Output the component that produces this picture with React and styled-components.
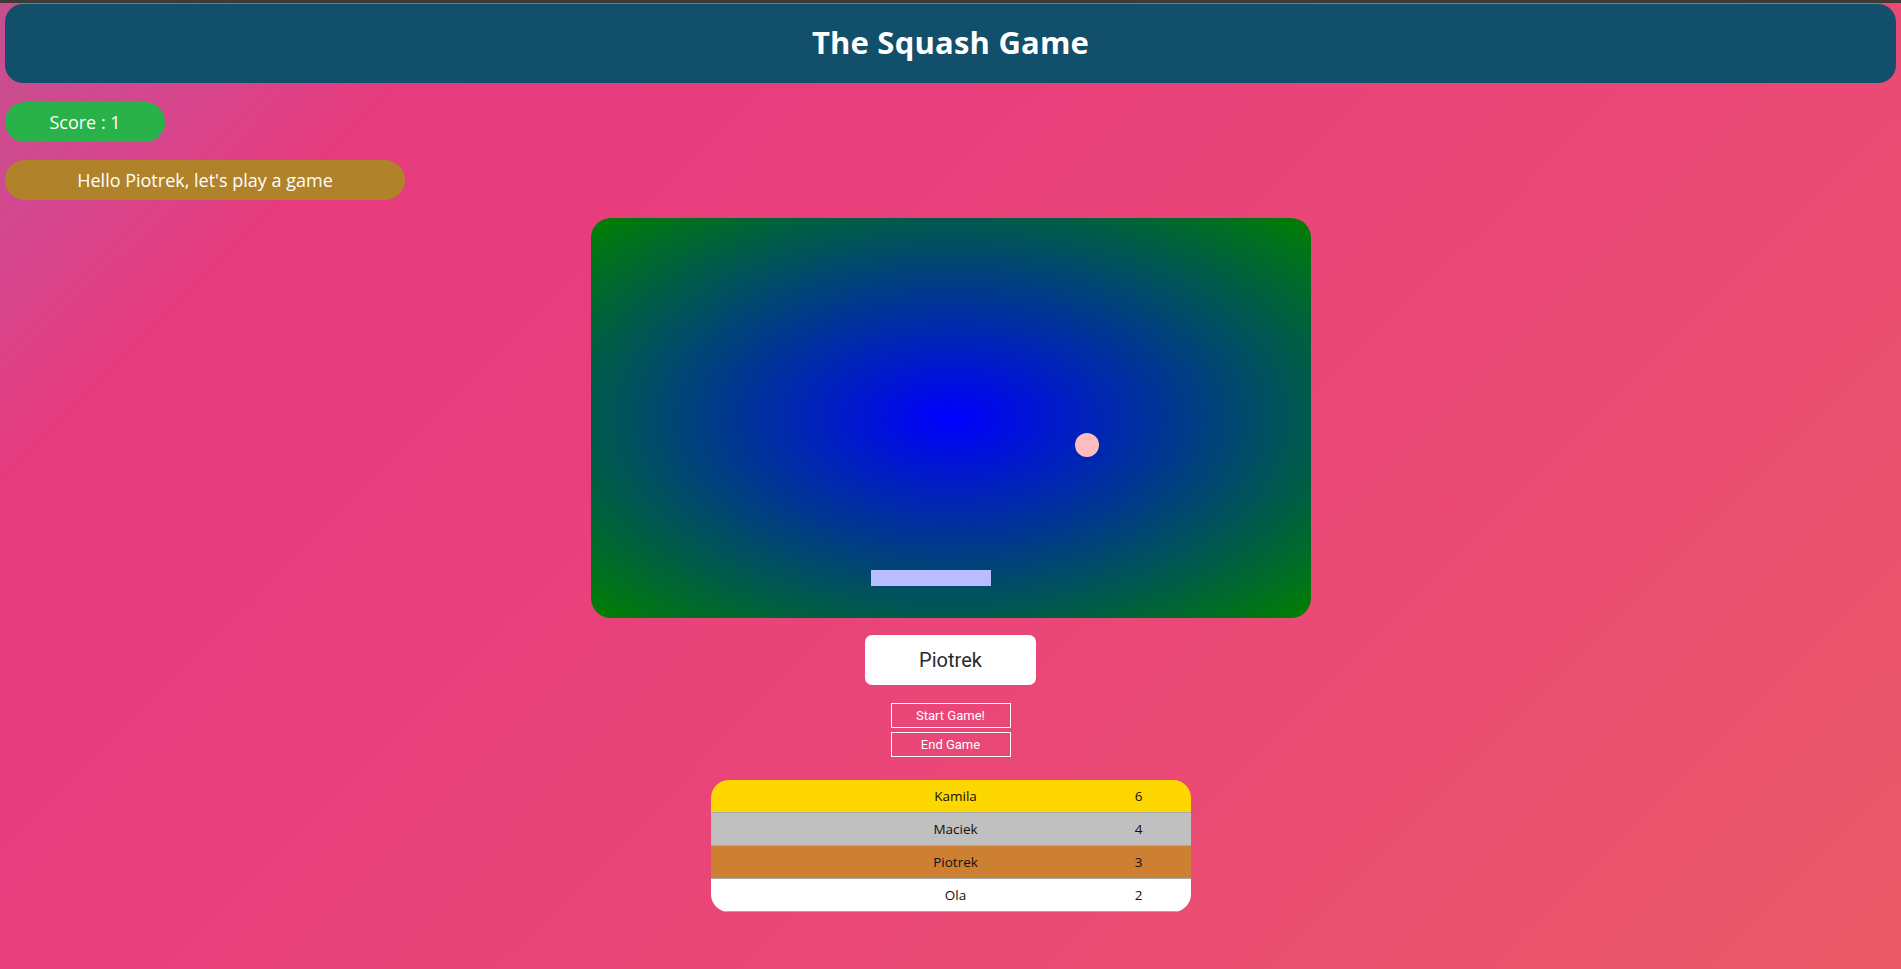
import React from "react";
import styled, { createGlobalStyle } from "styled-components";

const GlobalStyle = createGlobalStyle`
  html, body {
    margin: 0;
    padding: 0;
    min-height: 100%;
  }
  body {
    font-family: "Open Sans", "Liberation Sans", sans-serif;
    background: linear-gradient(135deg, #c5508f 0%, #d4478f 8.7%, #e63b7d 17%, #e83e7d 32%, #ea4a75 68%, #e95a66 100%);
    background-attachment: fixed;
    min-height: 100vh;
  }
`;

const Page = styled.div`
  min-height: 100vh;
  display: flex;
  flex-direction: column;
  box-sizing: border-box;
`;

const TopStrip = styled.div`
  height: 3px;
  background: #3e3935;
`;

const Content = styled.div`
  display: flex;
  flex-direction: column;
  padding: 1px 5px 30px;
`;

const Header = styled.header`
  height: 79px;
  box-sizing: border-box;
  padding-bottom: 4px;
  background: #124f6b;
  border-radius: 18px;
  display: flex;
  align-items: center;
  justify-content: center;
`;

const Title = styled.h1`
  margin: 0;
  color: #ffffff;
  font-family: "Open Sans", "Liberation Sans", sans-serif;
  font-size: 31px;
  font-weight: 700;
  letter-spacing: 0.2px;
`;

const Pill = styled.div`
  margin-top: ${(p) => p.$gap}px;
  width: ${(p) => p.$width}px;
  height: 40px;
  border-radius: 20px;
  background: ${(p) => p.$bg};
  color: #ffffff;
  display: flex;
  align-items: center;
  justify-content: center;
  font-size: 18px;
  font-family: "Open Sans", "Liberation Sans", sans-serif;
`;

const Court = styled.div`
  position: relative;
  align-self: center;
  margin-top: 18px;
  width: 720px;
  height: 400px;
  border-radius: 20px;
  background: radial-gradient(ellipse farthest-corner at 50% 50%, #0000ff 0%, #008000 100%);
  overflow: hidden;
`;

const Ball = styled.div`
  position: absolute;
  left: ${(p) => p.$x}px;
  top: ${(p) => p.$y}px;
  width: 24px;
  height: 24px;
  border-radius: 50%;
  background: #ffbcbc;
`;

const Paddle = styled.div`
  position: absolute;
  left: ${(p) => p.$x}px;
  top: ${(p) => p.$y}px;
  width: 120px;
  height: 16px;
  background: #b9bcff;
`;

const NameInput = styled.input`
  align-self: center;
  margin-top: 17px;
  width: 171px;
  height: 50px;
  box-sizing: border-box;
  border: none;
  border-radius: 7px;
  background: #ffffff;
  text-align: center;
  font-family: Roboto, "Liberation Sans", sans-serif;
  font-size: 20px;
  color: #2b2b2b;
  outline: none;
`;

const ButtonStack = styled.div`
  align-self: center;
  margin-top: 18px;
  display: flex;
  flex-direction: column;
  gap: 4px;
`;

const GameButton = styled.button`
  width: 120px;
  height: 25px;
  box-sizing: border-box;
  background: transparent;
  border: 1px solid #ffffff;
  color: #ffffff;
  font-family: Roboto, "Liberation Sans", sans-serif;
  font-size: 13px;
  padding: 0;
  cursor: pointer;
`;

const Board = styled.div`
  align-self: center;
  margin-top: 23px;
  width: 480px;
  border-radius: 18px;
  overflow: hidden;
  display: flex;
  flex-direction: column;
`;

const BoardRow = styled.div`
  display: grid;
  grid-template-columns: 376px 104px;
  height: 32px;
  align-items: center;
  background: ${(p) => p.$bg};
  border-bottom: 1px solid #a8a8a8;
  font-family: "Open Sans", "Liberation Sans", sans-serif;
  font-size: 13.5px;
  color: #111111;
`;

const NameCell = styled.div`
  padding-left: 114px;
  text-align: center;
`;

const ScoreCell = styled.div`
  text-align: center;
`;

const players = [
  { name: "Kamila", score: 6, bg: "#ffd700" },
  { name: "Maciek", score: 4, bg: "#c0c0c0" },
  { name: "Piotrek", score: 3, bg: "#cd7f32" },
  { name: "Ola", score: 2, bg: "#ffffff" },
];

export default function App() {
  return (
    <>
      <GlobalStyle />
      <Page>
        <TopStrip />
        <Content>
          <Header>
            <Title>The Squash Game</Title>
          </Header>
          <Pill $gap={19} $width={160} $bg="#2ab24a">Score : 1</Pill>
          <Pill $gap={18} $width={400} $bg="#b08229">Hello Piotrek, let's play a game</Pill>
          <Court>
            <Ball $x={484} $y={215} />
            <Paddle $x={280} $y={352} />
          </Court>
          <NameInput defaultValue="Piotrek" />
          <ButtonStack>
            <GameButton>Start Game!</GameButton>
            <GameButton>End Game</GameButton>
          </ButtonStack>
          <Board>
            {players.map((p) => (
              <BoardRow key={p.name} $bg={p.bg}>
                <NameCell>{p.name}</NameCell>
                <ScoreCell>{p.score}</ScoreCell>
              </BoardRow>
            ))}
          </Board>
        </Content>
      </Page>
    </>
  );
}
